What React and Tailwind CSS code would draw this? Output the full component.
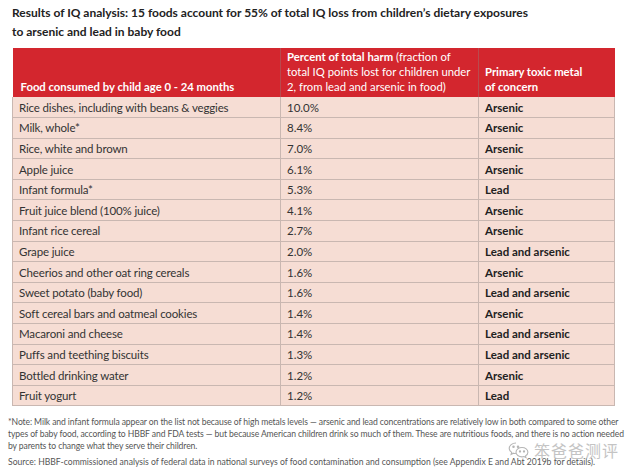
import React from "react";

const rows = [
  ["Rice dishes, including with beans & veggies", "10.0%", "Arsenic"],
  ["Milk, whole*", "8.4%", "Arsenic"],
  ["Rice, white and brown", "7.0%", "Arsenic"],
  ["Apple juice", "6.1%", "Arsenic"],
  ["Infant formula*", "5.3%", "Lead"],
  ["Fruit juice blend (100% juice)", "4.1%", "Arsenic"],
  ["Infant rice cereal", "2.7%", "Arsenic"],
  ["Grape juice", "2.0%", "Lead and arsenic"],
  ["Cheerios and other oat ring cereals", "1.6%", "Arsenic"],
  ["Sweet potato (baby food)", "1.6%", "Lead and arsenic"],
  ["Soft cereal bars and oatmeal cookies", "1.4%", "Arsenic"],
  ["Macaroni and cheese", "1.4%", "Lead and arsenic"],
  ["Puffs and teething biscuits", "1.3%", "Lead and arsenic"],
  ["Bottled drinking water", "1.2%", "Arsenic"],
  ["Fruit yogurt", "1.2%", "Lead"],
];

function WeChatIcon() {
  return (
    <svg width="22" height="18" viewBox="0 0 22 18" fill="none" stroke="#b5b5b5" strokeWidth="1.1">
      <path d="M8 2C4.1 2 1.2 4.4 1.2 7.3c0 1.7 1 3.1 2.5 4.1l-.6 2 2.3-1.2c.8.2 1.6.3 2.5.3" />
      <path d="M14 6.5c-3.3 0-6 2.1-6 4.7s2.7 4.7 6 4.7c.7 0 1.4-.1 2-.3l2 1-.5-1.7c1.4-.9 2.4-2.2 2.4-3.7 0-2.6-2.6-4.7-5.9-4.7z" />
      <circle cx="5.5" cy="5.8" r=".7" fill="#b5b5b5" />
      <circle cx="10" cy="5.8" r=".7" fill="#b5b5b5" />
      <circle cx="12" cy="10.5" r=".6" fill="#b5b5b5" />
      <circle cx="16" cy="10.5" r=".6" fill="#b5b5b5" />
    </svg>
  );
}

export default function App() {
  return (
    <div className="relative w-[640px] h-[474px] bg-white overflow-hidden font-['Lato',sans-serif]">
      <div className="pl-[12px] pt-[3px] text-[12px] leading-[19px] font-bold text-[#222]">
        Results of IQ analysis: 15 foods account for 55% of total IQ loss from children’s dietary exposures
        <br />
        to arsenic and lead in baby food
      </div>

      <table className="ml-[12px] mt-[7px] w-[602px] border-collapse text-[11.5px] text-[#333] table-fixed">
        <colgroup>
          <col className="w-[268px]" />
          <col className="w-[198px]" />
          <col className="w-[136px]" />
        </colgroup>
        <thead>
          <tr className="bg-[#d3262e] text-white h-[49px] text-[11.3px]">
            <th className="align-bottom text-left font-bold px-[8px] pb-[3px] leading-[15px] border-r border-[#b94a4e]">
              Food consumed by child age 0 - 24 months
            </th>
            <th className="align-bottom text-left font-normal pl-[6px] pr-[2px] pb-[3px] leading-[15px] border-r border-[#b94a4e]">
              <b>Percent of total harm</b> (fraction of
              <br />
              total IQ points lost for children under
              <br />
              2, from lead and arsenic in food)
            </th>
            <th className="align-bottom text-left font-bold px-[6px] pb-[3px] leading-[15px]">
              Primary toxic metal
              <br />
              of concern
            </th>
          </tr>
        </thead>
        <tbody className="bg-[#f6ddd4]">
          {rows.map((r, i) => (
            <tr key={i} className="h-[20.6px] border-b border-[#c9b7b1]">
              <td className="px-[6px] py-0 leading-[19px] tracking-[-0.15px] border-l border-r border-[#c9b7b1]">{r[0]}</td>
              <td className="px-[6px] py-0 leading-[19px] border-r border-[#c9b7b1]">{r[1]}</td>
              <td className="px-[6px] py-0 leading-[19px] font-bold text-[#222] border-r border-[#c9b7b1]">{r[2]}</td>
            </tr>
          ))}
        </tbody>
      </table>

      <div className="px-[8px] mt-[10px] text-[8.6px] leading-[12px] text-[#555]">
        <p className="tracking-[-0.1px]">
          *Note: Milk and infant formula appear on the list not because of high metals levels — arsenic and lead concentrations are relatively low in both compared to some other types of baby food, according to HBBF and FDA tests — but because American children drink so much of them. These are nutritious foods, and there is no action needed by parents to change what they serve their children.
        </p>
        <p className="mt-[4px]">
          Source: HBBF-commissioned analysis of federal data in national surveys of food contamination and consumption (see Appendix E and Abt 2019b for details).
        </p>
      </div>

      <div className="absolute left-[508px] top-[441px] flex items-center gap-[4px]">
        <WeChatIcon />
        <span className="text-[16px] leading-none text-[#c4c4c4] font-['Noto_Sans_CJK_SC',sans-serif] tracking-[1px]">笨爸爸测评</span>
      </div>
    </div>
  );
}
